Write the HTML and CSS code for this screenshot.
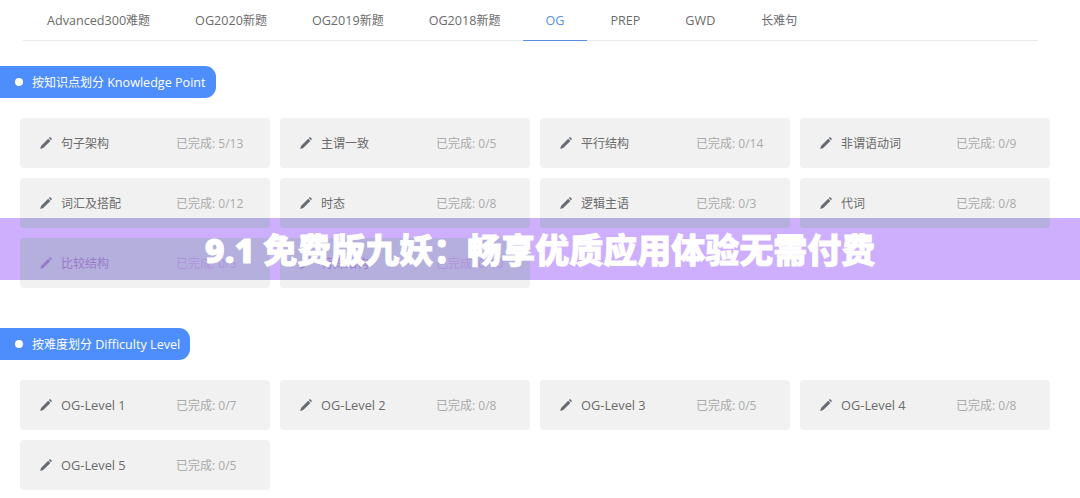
FILE: index.html
```html
<!DOCTYPE html>
<html lang="zh-CN">
<head>
  <meta charset="UTF-8">
  <title>OG</title>
  <link rel="stylesheet" href="styles.css">
</head>
<body>
  <svg class="sprite" width="0" height="0">
    <symbol id="pencil" viewBox="0 0 14 14">
      <path d="M11 1 13 3 12 4.2 9.8 2.1ZM9.2 2.8 11.4 4.9 4.2 12 1.2 13 2 9.9Z"/>
    </symbol>
  </svg>
  <nav class="tabs">
    <a class="tab" href="#"><span class="en">Advanced300</span>难题</a>
    <a class="tab" href="#"><span class="en">OG2020</span>新题</a>
    <a class="tab" href="#"><span class="en">OG2019</span>新题</a>
    <a class="tab" href="#"><span class="en">OG2018</span>新题</a>
    <a class="tab active" href="#"><span class="en">OG</span></a>
    <a class="tab" href="#"><span class="en">PREP</span></a>
    <a class="tab" href="#"><span class="en">GWD</span></a>
    <a class="tab" href="#">长难句</a>
  </nav>

  <h2 class="pill pill-knowledge"><i class="dot"></i>按知识点划分 <span class="en">Knowledge Point</span></h2>
  <div class="grid">
    <a class="card"><svg class="pen"><use href="#pencil"/></svg><span class="name">句子架构</span><span class="done">已完成: 5/13</span></a>
    <a class="card"><svg class="pen"><use href="#pencil"/></svg><span class="name">主谓一致</span><span class="done">已完成: 0/5</span></a>
    <a class="card"><svg class="pen"><use href="#pencil"/></svg><span class="name">平行结构</span><span class="done">已完成: 0/14</span></a>
    <a class="card"><svg class="pen"><use href="#pencil"/></svg><span class="name">非谓语动词</span><span class="done">已完成: 0/9</span></a>
    <a class="card cut-bottom"><svg class="pen"><use href="#pencil"/></svg><span class="name">词汇及搭配</span><span class="done">已完成: 0/12</span></a>
    <a class="card cut-bottom"><svg class="pen"><use href="#pencil"/></svg><span class="name">时态</span><span class="done">已完成: 0/8</span></a>
    <a class="card cut-bottom"><svg class="pen"><use href="#pencil"/></svg><span class="name">逻辑主语</span><span class="done">已完成: 0/3</span></a>
    <a class="card cut-bottom"><svg class="pen"><use href="#pencil"/></svg><span class="name">代词</span><span class="done">已完成: 0/8</span></a>
    <a class="card cut-top"><svg class="pen"><use href="#pencil"/></svg><span class="name">比较结构</span><span class="done">已完成: 0/5</span></a>
    <a class="card cut-top"><svg class="pen"><use href="#pencil"/></svg><span class="name">特殊结构</span><span class="done">已完成: 0/10</span></a>
  </div>

  <h2 class="pill pill-level"><i class="dot"></i>按难度划分 <span class="en">Difficulty Level</span></h2>
  <div class="grid">
    <a class="card"><svg class="pen"><use href="#pencil"/></svg><span class="name en-name">OG-Level 1</span><span class="done">已完成: 0/7</span></a>
    <a class="card"><svg class="pen"><use href="#pencil"/></svg><span class="name en-name">OG-Level 2</span><span class="done">已完成: 0/8</span></a>
    <a class="card"><svg class="pen"><use href="#pencil"/></svg><span class="name en-name">OG-Level 3</span><span class="done">已完成: 0/5</span></a>
    <a class="card"><svg class="pen"><use href="#pencil"/></svg><span class="name en-name">OG-Level 4</span><span class="done">已完成: 0/8</span></a>
    <a class="card"><svg class="pen"><use href="#pencil"/></svg><span class="name en-name">OG-Level 5</span><span class="done">已完成: 0/5</span></a>
  </div>

  <div class="banner">9.1 免费版九妖：畅享优质应用体验无需付费</div>
</body>
</html>
```

FILE: styles.css
```css
body { margin: 0; height: 498px; overflow: hidden; background: #fff; font-family: "Open Sans", "Noto Sans CJK SC", sans-serif; color: #666; }
.sprite { position: absolute; }
.en { font-size: 12.6px; }

.tabs { display: flex; height: 40px; margin: 0 42px 0 23px; padding-left: 1.5px; border-bottom: 1px solid #e8eaec; }
.tab { height: 40px; padding: 0 22.5px; line-height: 41px; font-size: 12px; color: #6b6b6b; text-decoration: none; }
.tab:last-child { margin-left: 1px; }
.tab.active { margin-right: 1px; color: #5b8fdf; border-bottom: 1px solid #5b8fdf; }

.pill { display: flex; align-items: center; height: 32px; margin: 25px 0 20px; border-radius: 0 11px 11px 0; background: #4e8efc; color: #fff; font-size: 12px; font-weight: normal; white-space: pre; }
.pill-knowledge { width: 216px; }
.pill-level { width: 190px; margin-top: 40px; }
.dot { width: 8px; height: 8px; margin: 0 9px 0 15px; border-radius: 50%; background: #fff; }

.grid { display: grid; grid-template-columns: repeat(4, 250px); grid-auto-rows: 50px; gap: 10px; margin-left: 20px; }
.card { display: flex; align-items: center; padding: 0 25px 0 19px; border-radius: 4px; background: #f1f1f1; font-size: 12px; }
.cut-bottom { background: linear-gradient(#f1f1f1 40px, #b8ffa0 40px); }
.cut-top { background: linear-gradient(#b8ffa0 42px, #f1f1f1 42px); }
.pen { width: 14px; height: 14px; margin-right: 8px; fill: #666a72; }
.name { flex: 1; color: #6b6b6b; }
.en-name { font-size: 12.8px; }
.done { width: 69px; color: #aaa; }

.banner { position: absolute; left: 0; right: 0; top: 218px; height: 62px; background: rgba(178, 132, 252, 0.65); color: #fff; font-size: 34px; font-weight: 900; -webkit-text-stroke: 0.8px #fff; line-height: 65px; text-align: center; }
```
